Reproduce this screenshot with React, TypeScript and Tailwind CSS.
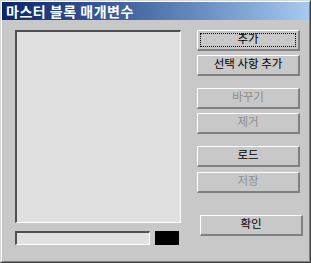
import React from "react";

const font = { fontFamily: '"Noto Sans CJK KR", "Noto Sans", sans-serif' };

function Btn({
  label,
  disabled,
  focus,
  className = "",
}: {
  label: string;
  disabled?: boolean;
  focus?: boolean;
  className?: string;
}) {
  return (
    <div
      className={
        "relative flex h-[21px] w-[103px] items-center justify-center border-t border-l border-b-2 border-r-2 border-t-white border-l-white border-b-[#808080] border-r-[#808080] bg-[#c8c8c8] text-[11.5px] leading-none " +
        (disabled ? "text-[#8e8e8e] " : "text-black ") +
        className
      }
    >
      {focus && (
        <div className="pointer-events-none absolute inset-x-[2px] inset-y-[2px] border border-dotted border-black" />
      )}
      <span className="relative top-[-1px]">{label}</span>
    </div>
  );
}

export default function App() {
  return (
    <div style={font} className="h-[263px] w-[311px] overflow-hidden">
      <div className="h-full w-full border-t border-l border-r border-b border-t-[#d8d8d8] border-l-[#d8d8d8] border-r-[#404040] border-b-[#404040]">
        <div className="flex h-full w-full flex-col border-t border-l border-r border-b border-t-white border-l-white border-r-[#808080] border-b-[#808080] bg-[#c8c8c8]">
          <div className="flex h-[18px] items-center bg-gradient-to-r from-[#0a246a] to-[#a6caf0] pl-[4px]">
            <span className="text-[14px] font-bold leading-none tracking-[0.5px] text-white">
              마스터 블록 매개변수
            </span>
          </div>
          <div className="flex flex-1 pt-[10px] pl-[13px]">
            <div className="flex w-[166px] flex-col">
              <div className="h-[193px] w-[166px] border-t-2 border-l-2 border-b border-r border-t-[#505050] border-l-[#505050] border-b-white border-r-white bg-[#e0e0e0]" />
              <div className="mt-[8px] flex items-center">
                <div className="h-[14px] w-[135px] border-t-2 border-l-2 border-b border-r border-t-[#505050] border-l-[#505050] border-b-white border-r-white bg-[#e0e0e0]" />
                <div className="ml-[5px] h-[14px] w-[24px] bg-black" />
              </div>
            </div>
            <div className="ml-[16px] flex flex-col">
              <Btn label="추가" focus />
              <Btn label="선택 사항 추가" className="mt-[4px]" />
              <Btn label="바꾸기" disabled className="mt-[12px]" />
              <Btn label="제거" disabled className="mt-[4px]" />
              <Btn label="로드" className="mt-[12px]" />
              <Btn label="저장" disabled className="mt-[5px]" />
              <Btn label="확인" className="ml-[3px] mt-[22px]" />
            </div>
          </div>
        </div>
      </div>
    </div>
  );
}
